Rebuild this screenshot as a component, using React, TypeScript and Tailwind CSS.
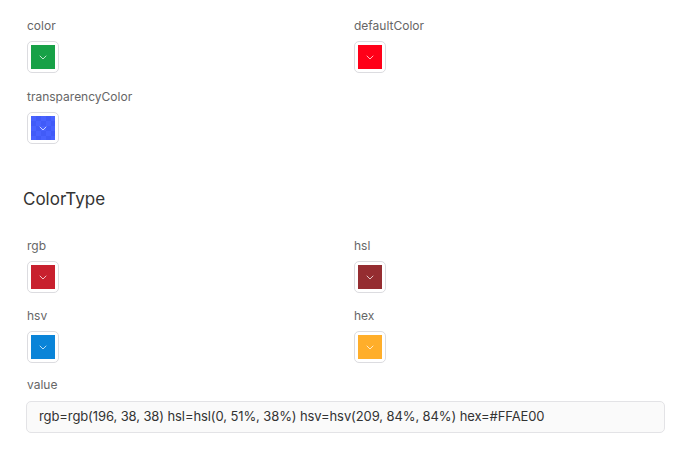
import React from "react";

interface SwatchProps {
  label: string;
  color: string;
  checker?: boolean;
}

function Chevron() {
  return (
    <svg width="8" height="5" viewBox="0 0 8 5" fill="none" className="relative">
      <path d="M1 1l3 3 3-3" stroke="rgba(255,255,255,0.8)" strokeWidth="0.9" strokeLinecap="round" strokeLinejoin="round" />
    </svg>
  );
}

function Swatch({ label, color, checker }: SwatchProps) {
  return (
    <div className="flex flex-col items-start">
      <div className="text-[12px] leading-4 text-[#666]">{label}</div>
      <button className="mt-[7px] w-8 h-8 rounded-[5px] border border-[#dcdce0] bg-white p-[3px] flex items-center justify-center">
        <div className="relative w-6 h-6 flex items-center justify-center overflow-hidden">
          {checker && (
            <div className="absolute inset-0 bg-[repeating-conic-gradient(#ccc_0_25%,#fff_0_50%)] bg-[length:10px_10px]" />
          )}
          <div className="absolute inset-0" style={{ backgroundColor: color }} />
          <Chevron />
        </div>
      </button>
    </div>
  );
}

export default function App() {
  return (
    <div className="w-[690px] h-[460px] bg-white font-['Inter','Liberation_Sans',sans-serif] pl-[27px] pr-[25px] pt-[18px]">
      <div className="grid grid-cols-2 gap-x-4 gap-y-4">
        <Swatch label="color" color="#17a147" />
        <Swatch label="defaultColor" color="#ff0018" />
        <Swatch label="transparencyColor" color="rgba(40,70,255,0.85)" checker />
      </div>

      <h2 className="mt-[43px] -ml-[4px] text-[17px] leading-6 text-[#333]">ColorType</h2>

      <div className="mt-[27px] grid grid-cols-2 gap-x-4 gap-y-[15px]">
        <Swatch label="rgb" color="#c8202e" />
        <Swatch label="hsl" color="#952d31" />
        <Swatch label="hsv" color="#0a84d8" />
        <Swatch label="hex" color="#ffae2a" />
      </div>

      <div className="mt-[14px]">
        <div className="text-[12px] leading-4 text-[#666]">value</div>
        <div className="mt-2 -ml-px h-8 rounded-[5px] border border-[#e3e3e6] bg-[#fafafa] flex items-center px-3 text-[13px] tracking-[-0.1px] text-[#333]">
          rgb=rgb(196, 38, 38) hsl=hsl(0, 51%, 38%) hsv=hsv(209, 84%, 84%) hex=#FFAE00
        </div>
      </div>
    </div>
  );
}
